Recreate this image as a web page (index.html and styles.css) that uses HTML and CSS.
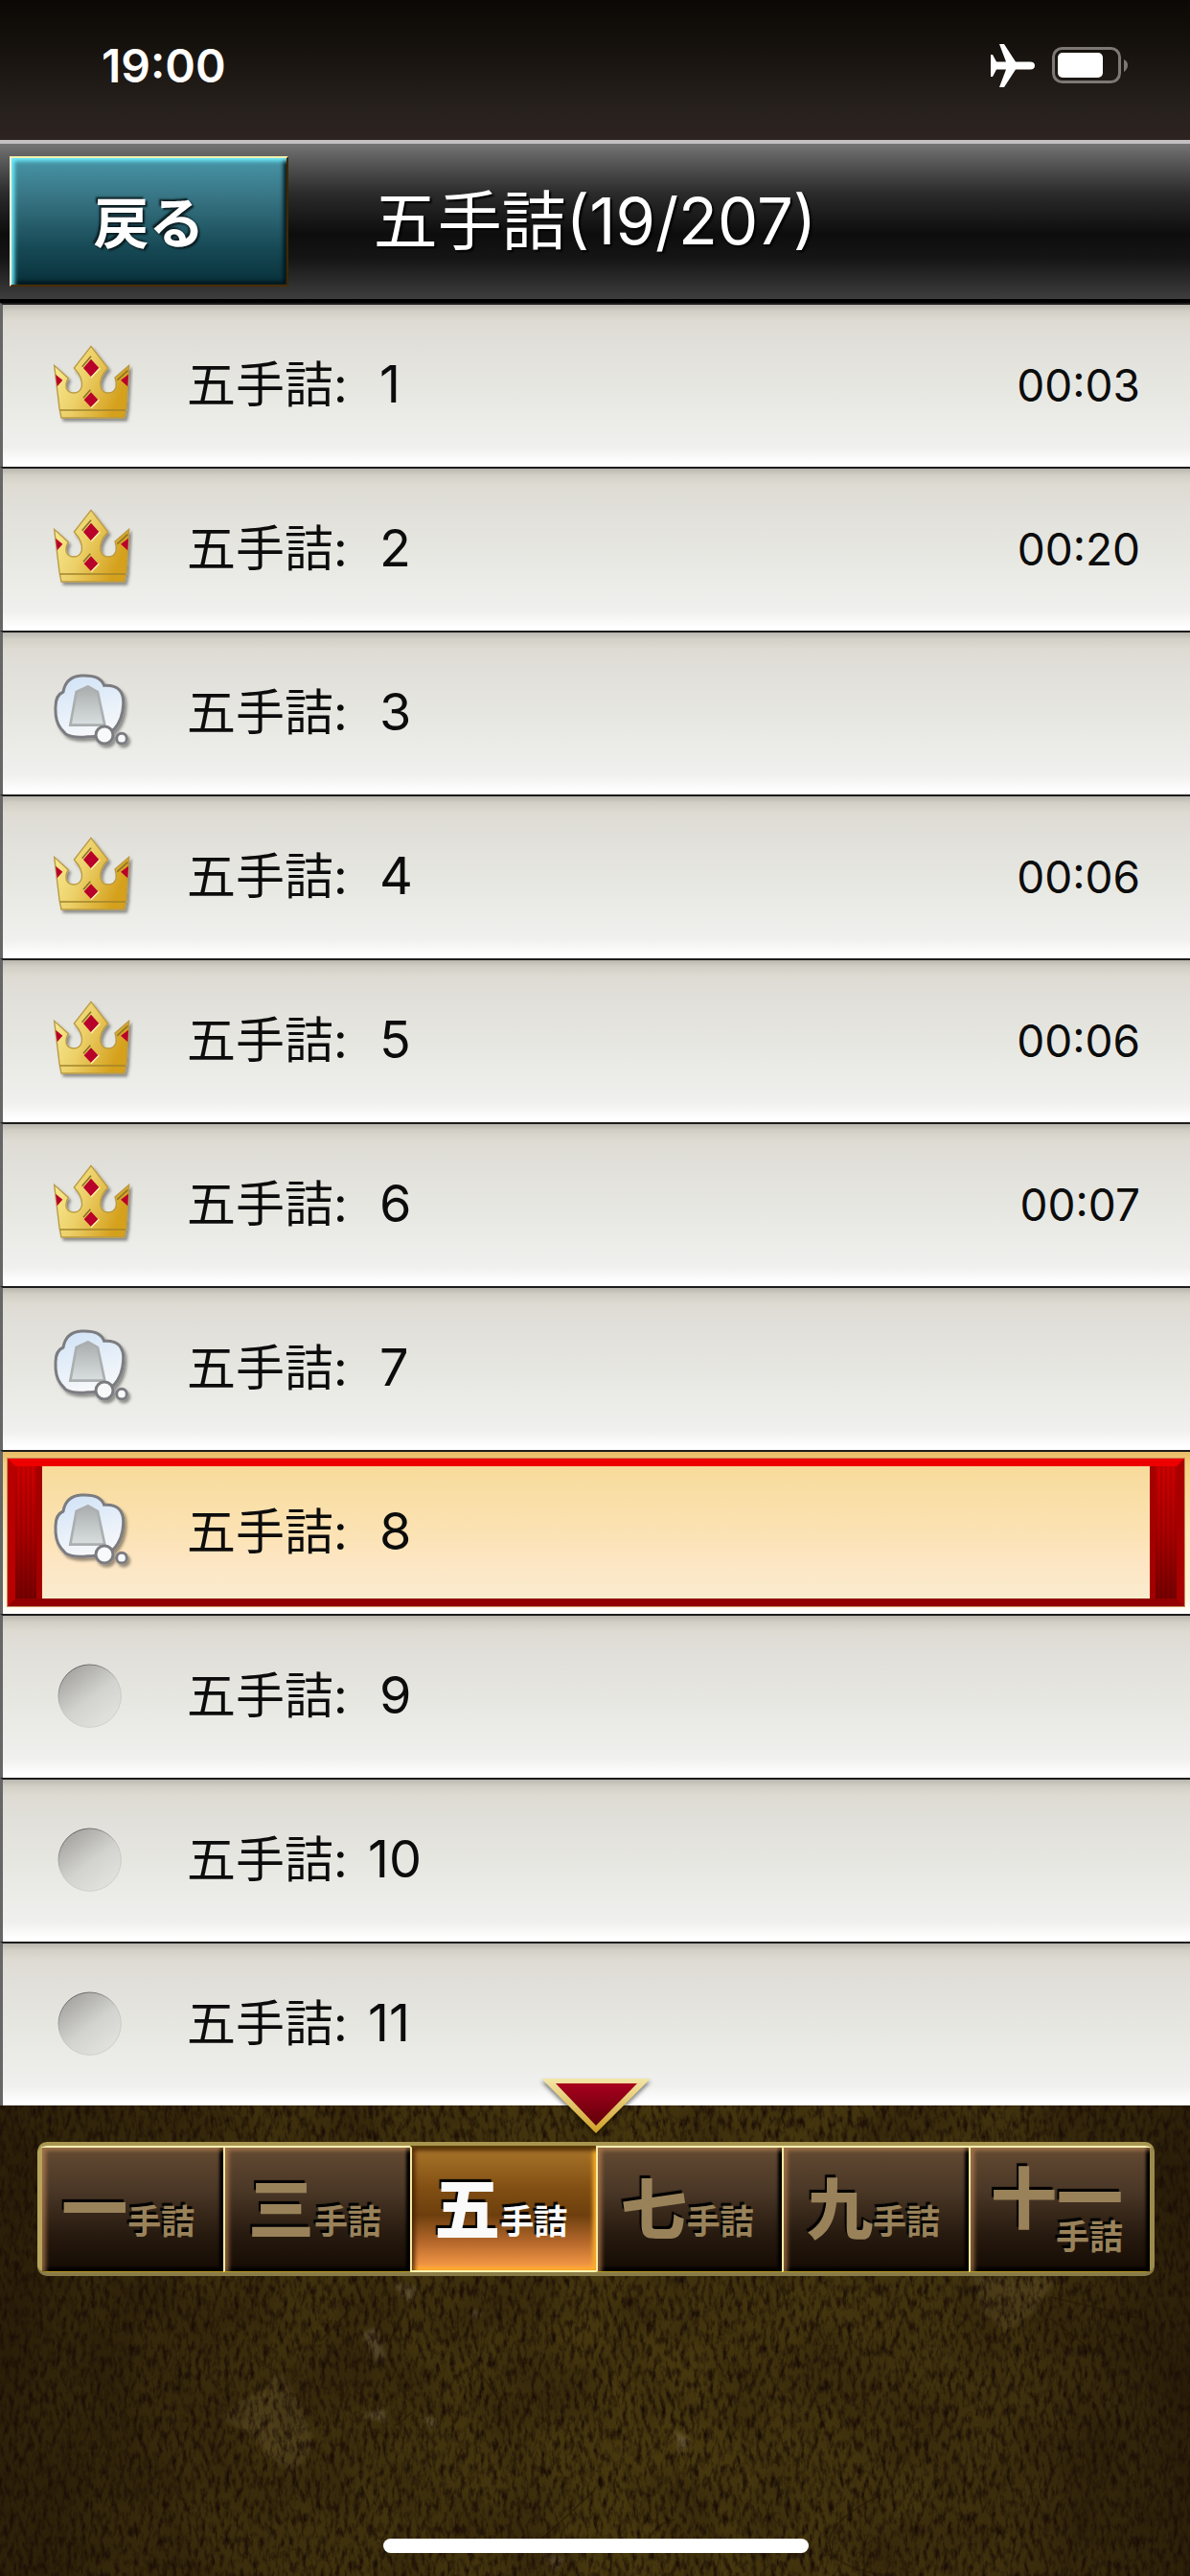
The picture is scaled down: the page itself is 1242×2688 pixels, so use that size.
FILE: index.html
```html
<!DOCTYPE html>
<html lang="ja">
<head>
  <meta charset="UTF-8">
  <meta name="viewport" content="width=device-width, initial-scale=1">
  <title>五手詰</title>
  <link rel="stylesheet" href="styles.css">
</head>
<body>
  <!-- icons -->
  <svg class="defs" width="0" height="0" aria-hidden="true">
    <defs>
      <linearGradient id="gold" x1="0" y1="0" x2="1" y2="0.4">
        <stop offset="0" stop-color="#fbf09a"/>
        <stop offset="0.5" stop-color="#ecd069"/>
        <stop offset="1" stop-color="#d5a01c"/>
      </linearGradient>
      <linearGradient id="cloud" x1="0" y1="0" x2="0.3" y2="1">
        <stop offset="0" stop-color="#cfe2f7"/>
        <stop offset="1" stop-color="#f6f8fa"/>
      </linearGradient>
      <linearGradient id="koma" x1="0" y1="0" x2="0" y2="1">
        <stop offset="0" stop-color="#a9adac"/>
        <stop offset="1" stop-color="#d9dfe0"/>
      </linearGradient>
      <linearGradient id="hole" x1="0.1" y1="0.1" x2="0.7" y2="0.9">
        <stop offset="0" stop-color="#a3a29f"/>
        <stop offset="0.6" stop-color="#d2d2ce"/>
        <stop offset="1" stop-color="#dfe0dc"/>
      </linearGradient>
      <linearGradient id="holeEdge" x1="0.2" y1="0" x2="0.7" y2="1">
        <stop offset="0" stop-color="#555"/>
        <stop offset="0.5" stop-color="#c4c4c0"/>
        <stop offset="1" stop-color="#d0d0cc"/>
      </linearGradient>
      <filter id="drop" x="-20%" y="-20%" width="150%" height="150%">
        <feDropShadow dx="7" dy="9" stdDeviation="5" flood-color="#000" flood-opacity="0.4"/>
      </filter>
    </defs>
    <symbol id="crown" viewBox="45 58 252 252">
      <g filter="url(#drop)">
        <path d="M165 62 L218 130 Q190 160 195 188 Q200 208 218 208 Q238 208 243 190 Q246 176 240 160 L284 122 L276 255 L270 286 L72 286 L66 255 L50 122 L94 162 Q84 178 88 194 Q94 208 110 208 Q130 208 136 188 Q140 160 112 130 Z" fill="url(#gold)" stroke="#b99a45" stroke-width="4"/>
        <path d="M68 262 H273" stroke="#a1852b" stroke-width="5"/>
        <path d="M165 102 L190 130 L165 158 L141 130 Z M165 206 L187 230 L165 253 L143 230 Z M54 150 L76 168 L59 188 Z M282 150 L258 168 L280 188 Z" fill="#b8002c"/>
        <path d="M137 126 L165 93 M141 224 L163 198 M247 168 L280 138" stroke="#8d7425" stroke-width="5" fill="none"/>
        <path d="M165 160 L193 130 M165 255 L190 230" stroke="#fff3b0" stroke-width="4"/>
      </g>
    </symbol>
    <symbol id="thinking" viewBox="75 64 252 252">
      <g filter="url(#drop)">
        <path d="M108 124 Q116 76 165 73 Q225 70 236 104 Q300 100 296 165 Q294 210 268 240 Q240 266 185 264 Q140 270 116 256 L100 238 Q82 215 84 170 Q84 134 108 124 Z" fill="url(#cloud)" stroke="#7b7c80" stroke-width="9"/>
        <path d="M186 107 L216 124 L238 228 H130 L149 124 Z" fill="url(#koma)" stroke="#abafaf" stroke-width="8"/>
        <circle cx="237" cy="259" r="27" fill="#f8f9fa" stroke="#7b7c80" stroke-width="9"/>
        <circle cx="291" cy="270" r="16" fill="#f8f9fa" stroke="#7b7c80" stroke-width="9"/>
      </g>
    </symbol>
    <symbol id="empty" viewBox="0 5 252 252">
      <circle cx="116" cy="130" r="98" fill="url(#hole)" stroke="url(#holeEdge)" stroke-width="3"/>
    </symbol>
  </svg>

  <div class="status-bar">
    <span class="clock">19:00</span>
    <span class="status-icons">
      <svg width="46" height="46" viewBox="0 0 46 46">
        <path d="M46 23.500 Q46 27.500 41 27.500 H26 L14 46 H9 L16 27.500 H6 L2 35 H0 V12 H2 L6 19.500 H16 L9 1 H14 L26 19.500 H41 Q46 19.500 46 23.500 Z" fill="#fff"/>
      </svg>
      <svg width="80" height="38" viewBox="0 0 80 38">
        <rect x="1.500" y="1.500" width="69" height="35" rx="9" fill="none" stroke="#7d7874" stroke-width="3"/>
        <rect x="6" y="6" width="47" height="26" rx="5" fill="#fff"/>
        <path d="M75 13 Q79 15 79 19 Q79 23 75 26 Z" fill="#7d7874"/>
      </svg>
    </span>
  </div>

  <header class="title-bar">
    <button class="back">戻る</button>
    <h1>五手詰(19/207)</h1>
  </header>

  <ul class="problems" id="problems"></ul>

  <footer class="footer">
    <svg class="paper" viewBox="0 0 1242 491" preserveAspectRatio="xMidYMid slice" aria-hidden="true">
      <defs>
        <linearGradient id="wood" x1="0" y1="0" x2="1" y2="0">
          <stop offset="0" stop-color="#2d2109"/>
          <stop offset="0.2" stop-color="#3d2f0c"/>
          <stop offset="0.55" stop-color="#47380e"/>
          <stop offset="0.85" stop-color="#3f310d"/>
          <stop offset="1" stop-color="#2c2009"/>
        </linearGradient>
        <filter id="grain" x="0" y="0" width="100%" height="100%" color-interpolation-filters="sRGB">
          <feTurbulence type="fractalNoise" baseFrequency="0.2 0.08" numOctaves="5" seed="7"/>
          <feColorMatrix values="0 0 0 0 0.1  0 0 0 0 0.05  0 0 0 0 0.02  2.4 0 0 0 -1"/>
        </filter>
        <filter id="stains" x="0" y="0" width="100%" height="100%" color-interpolation-filters="sRGB">
          <feTurbulence type="fractalNoise" baseFrequency="0.012" numOctaves="3" seed="3"/>
          <feColorMatrix values="0 0 0 0 0.12  0 0 0 0 0.07  0 0 0 0 0.02  0.8 0 0 0 -0.3"/>
        </filter>
        <filter id="soft"><feGaussianBlur stdDeviation="2"/></filter>
      </defs>
      <rect width="1242" height="491" fill="url(#wood)"/>
      <g fill="#5a4a22" opacity="0.6" filter="url(#soft)">
        <path d="M290 276 L310 305 L326 345 Q324 370 306 384 Q280 370 262 344 L230 326 Q250 305 278 296 Z"/>
        <path d="M1012 178 H1104 L1080 215 L1050 236 L1024 215 Z"/>
      </g>
      <g fill="#7a6a4a" opacity="0.6" filter="url(#soft)">
        <path d="M410 186 l26 4 l-8 16 z M378 238 l14 -6 l10 30 l-8 8 z M378 324 l22 -8 l4 14 z M440 322 l16 6 l-6 10 z M704 338 l16 12 l-10 14 z M566 468 l24 4 l-10 14 z M490 212 l14 4 l-10 8 z"/>
      </g>
      <rect width="1242" height="491" filter="url(#stains)"/>
      <rect width="1242" height="491" filter="url(#grain)"/>
      <g stroke="#241605" stroke-width="2" fill="none" opacity="0.5">
        <path d="M366 212 L334 246 M430 320 L414 334 M488 260 L524 312 M620 402 L566 452 M704 432 Q690 434 676 452 M920 406 Q850 440 870 470 Q890 488 930 490"/>
        <path d="M1096 200 Q1160 214 1196 224 M1140 262 Q1150 236 1168 240 M530 78 L538 62 M1096 222 L1140 256"/>
      </g>
    </svg>
    <svg class="marker" width="116" height="62" viewBox="0 0 116 62" aria-hidden="true">
      <defs>
        <linearGradient id="rim" x1="0" y1="0" x2="0" y2="1">
          <stop offset="0" stop-color="#f3e6a8"/>
          <stop offset="1" stop-color="#cf9f24"/>
        </linearGradient>
        <linearGradient id="ruby" x1="0" y1="0" x2="0" y2="1">
          <stop offset="0" stop-color="#a8001e"/>
          <stop offset="1" stop-color="#5e0008"/>
        </linearGradient>
      </defs>
      <path d="M0 1 H114 L57 58 Z" fill="url(#rim)"/>
      <path d="M15 6 H100 L57 50 Z" fill="url(#ruby)"/>
    </svg>
    <nav class="tabs">
      <button class="tab"><b>一</b><span>手詰</span></button>
      <button class="tab"><b>三</b><span>手詰</span></button>
      <button class="tab active"><b>五</b><span>手詰</span></button>
      <button class="tab"><b>七</b><span>手詰</span></button>
      <button class="tab"><b>九</b><span>手詰</span></button>
      <button class="tab two-line"><b>十一</b><span>手詰</span></button>
    </nav>
    <div class="home-indicator"></div>
  </footer>

  <script>
    const problems = [
      { icon: "crown", time: "00:03" },
      { icon: "crown", time: "00:20" },
      { icon: "thinking" },
      { icon: "crown", time: "00:06" },
      { icon: "crown", time: "00:06" },
      { icon: "crown", time: "00:07" },
      { icon: "thinking" },
      { icon: "thinking", selected: true },
      { icon: "empty" },
      { icon: "empty" },
      { icon: "empty" }
    ];

    const list = document.getElementById("problems");

    problems.forEach((p, i) => {
      const no = i + 1;
      const item = document.createElement("li");
      item.innerHTML = `
        <button class="problem${p.selected ? " selected" : ""}">
          ${p.selected ? '<span class="frame"></span>' : ""}
          <svg class="icon" aria-hidden="true"><use href="#${p.icon}"/></svg>
          <span class="label">
            <span class="name">五手詰:</span>
            <span class="number${no < 10 ? " single" : ""}">${no}</span>
          </span>
          <span class="time">${p.time || ""}</span>
        </button>`;
      list.appendChild(item);
    });
  </script>
</body>
</html>
```

FILE: styles.css
```css
* {
  box-sizing: border-box;
}
body {
  margin: 0;
  min-height: 100vh;
  display: flex;
  flex-direction: column;
  background: #3a2d0a;
  font-family: Inter, "Noto Sans CJK JP", sans-serif;
  color: #0c0c0c;
}
button {
  margin: 0;
  padding: 0;
  border: none;
  font-family: inherit;
  cursor: pointer;
}
.defs {
  position: absolute;
}

/* status bar */
.status-bar {
  display: flex;
  justify-content: space-between;
  align-items: center;
  height: 146px;
  padding: 0 64px 10px 106px;
  background: linear-gradient(#0c0805, #14100b 30%, #26201c 75%, #2d2320);
  color: #fff;
}
.clock {
  font-size: 48px;
  font-weight: 600;
}
.status-icons {
  display: flex;
  align-items: center;
  gap: 18px;
}

/* title */
.title-bar {
  display: grid;
  grid-template-columns: 1fr auto 1fr;
  align-items: center;
  height: 170px;
  padding-left: 10px;
  padding-right: 10px;
  border-top: 4px solid #c4c0c2;
  border-bottom: 4px solid #000;
  background: linear-gradient(#747474, #505050 15%, #2b2b2b 32%, #0d0d0d 58%, #151515 74%, #3e3e3e);
}
.back {
  width: 291px;
  height: 136px;
  padding-bottom: 4px;
  border: 2px solid;
  border-color: #f2f0b0 #3f2604 #4a2c04 #f2f8d8;
  background: linear-gradient(#4796a8, #35707f 35%, #174a56 70%, #07303a);
  box-shadow: inset 3px 3px 4px #6ff0ff, inset -3px -3px 4px #001014;
  color: #fff;
  font-size: 58px;
  font-weight: 700;
  text-shadow: -2px -2px 2px #0a1c20, 2px 2px 2px #0a1c20;
}
.title-bar h1 {
  margin: 0;
  color: #fff;
  font-size: 67px;
  font-weight: 400;
  line-height: 80px;
  text-shadow: 2px 2px 2px #000;
}

/* problem list */
.problems {
  margin: 0;
  padding: 0;
  list-style: none;
}
.problem {
  position: relative;
  display: flex;
  align-items: center;
  width: 100%;
  height: 171px;
  padding: 0 52px 2px 52px;
  border-top: 2px solid #1c1c1c;
  border-left: 3px solid #666;
  background: linear-gradient(#b9b6ae, #d2cfc7 4%, #dedbd3 10%, #e2e1dc 30%, #ebece7 70%, #f0f0ef 88%, #fff 98%);
  color: inherit;
  text-align: left;
}
.icon {
  position: relative;
  width: 84px;
  height: 84px;
  margin-right: 56px;
}
.label {
  position: relative;
  display: flex;
  align-items: baseline;
  line-height: 60px;
}
.name {
  width: 189px;
  font-size: 51px;
}
.number {
  font-size: 54px;
}
.single {
  padding-left: 12px;
}
.time {
  margin-left: auto;
  font-size: 46px;
}

/* selected problem */
.selected {
  background: linear-gradient(#e8bc66, #f4d080 8%, #fbe7b8 50%, #fff3d8 90%, #fff);
}
.frame {
  position: absolute;
  top: 7px;
  right: 6px;
  bottom: 8px;
  left: 5px;
  display: flex;
  justify-content: space-between;
  border: 8px solid;
  border-color: #ee0000 #a80000 #920000 #b80000;
  outline: 1px solid #c88a60;
  background: linear-gradient(#f7db9b, #fce3b6 55%, #fde5c2 70%, #f9ecce);
}
.frame::before,
.frame::after {
  content: "";
  width: 28px;
  box-sizing: border-box;
  border: solid #a40000;
  border-width: 0 6px 0 0;
  background: repeating-linear-gradient(90deg, rgba(60, 0, 0, 0.15) 0 2px, transparent 2px 5px), linear-gradient(#cc0000, #aa0000 50%, #760000);
}
.frame::after {
  border-width: 0 0 0 6px;
}

/* footer */
.footer {
  position: relative;
  flex: 1;
  display: flex;
  flex-direction: column;
  justify-content: space-between;
  padding: 38px 37px 24px 39px;
}
.paper {
  position: absolute;
  top: 0;
  left: 0;
  width: 100%;
  height: 100%;
}
.marker {
  position: absolute;
  top: -29px;
  left: 50%;
  margin-left: -56px;
  filter: drop-shadow(0 3px 2px rgba(0, 0, 0, 0.5));
}
.tabs {
  position: relative;
  display: grid;
  grid-template-columns: repeat(6, 1fr);
  height: 140px;
  border-top: 4px solid #a8954f;
  border-bottom: 4px solid #8a7c46;
  border-radius: 10px;
  overflow: hidden;
}
.tab {
  display: flex;
  justify-content: center;
  align-items: baseline;
  padding-top: 17px;
  padding-right: 6px;
  border-left: 2px solid #f6eaa0;
  border-top: 2px solid #fbf0b4;
  border-bottom: 1px solid #b89a20;
  background: linear-gradient(#634a32, #4a3726 35%, #271a0f 70%, #150b03) padding-box;
  box-shadow: inset 4px 3px 4px rgba(200, 140, 90, 0.6), inset -4px -4px 3px #000;
  color: #99825a;
  font-weight: 700;
  text-shadow: -2px -3px 1px #000;
}
.tab:first-child {
  border-left: 5px solid #b8a55c;
  padding-right: 10px;
}
.tab:last-child {
  border-right: 5px solid #9c8b4c;
}
.tab b {
  font-size: 69px;
  line-height: 96px;
}
.tab span {
  font-size: 35px;
}
.tab.active {
  border-top-color: #5a3c08;
  border-bottom: 2px solid #fff7b0;
  background: linear-gradient(#a9752a, #7f4d12 35%, #6e3f0e 55%, #b86a2c 78%, #ff9f4a);
  box-shadow: inset 3px 3px 4px rgba(60, 25, 0, 0.8), inset -3px -3px 4px #ffb02a;
  color: #fafafa;
}
.tab.two-line {
  flex-direction: column;
  justify-content: flex-start;
  align-items: flex-end;
  padding-right: 28px;
}
.two-line b {
  line-height: 74px;
}
.two-line span {
  margin-top: -16px;
  line-height: 36px;
}
.home-indicator {
  position: relative;
  align-self: center;
  width: 444px;
  height: 15px;
  border-radius: 8px;
  background: #fff;
}
```
